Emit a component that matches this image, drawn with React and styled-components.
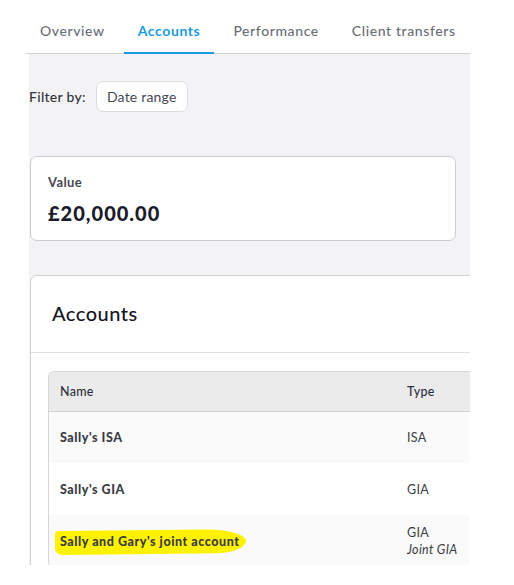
import React from "react";
import styled, { createGlobalStyle } from "styled-components";

const Global = createGlobalStyle`
  html, body { margin: 0; padding: 0; background: #ffffff; }
  body { font-family: "Lato", "Noto Sans", sans-serif; -webkit-font-smoothing: antialiased; }
  * { box-sizing: border-box; }
`;

const Page = styled.div`
  width: 441px;
  margin-left: 29px;
`;

const TabBar = styled.div`
  display: flex;
  gap: 5px;
  height: 54px;
  border-bottom: 1px solid #cfd0d4;
  margin-left: -3px;
`;

const Tab = styled.div`
  display: flex;
  align-items: center;
  padding: 9px 14px 0;
  font-size: 14px;
  letter-spacing: 0.6px;
  color: ${(p) => (p.$active ? "#1b9ce0" : "#6b6e78")};
  font-weight: ${(p) => (p.$active ? 700 : 500)};
  border-bottom: 2px solid ${(p) => (p.$active ? "#1b9ce0" : "transparent")};
  margin-bottom: -1px;
  white-space: nowrap;
`;

const Content = styled.div`
  background: #f3f3f5;
  height: 511px;
  overflow: hidden;
  padding: 27px 0 0 1px;
`;

const FilterRow = styled.div`
  display: flex;
  align-items: center;
  gap: 10px;
  margin-left: -1px;
`;

const FilterLabel = styled.span`
  font-size: 14px;
  color: #33353d;
  font-weight: 500;
  letter-spacing: 0.3px;
`;

const FilterButton = styled.div`
  height: 31px;
  padding: 0 10px;
  display: flex;
  align-items: center;
  background: #ffffff;
  border: 1px solid #dcdde1;
  border-radius: 7px;
  font-size: 14px;
  color: #454852;
  letter-spacing: 0.2px;
`;

const ValueCard = styled.div`
  margin-top: 44px;
  width: 426px;
  height: 85px;
  background: #ffffff;
  border: 1px solid #cbccd1;
  border-radius: 7px;
  padding: 17px 17px;
`;

const ValueLabel = styled.div`
  font-size: 13px;
  font-weight: 700;
  color: #464852;
  line-height: 16px;
  letter-spacing: 0.4px;
`;

const ValueAmount = styled.div`
  margin-top: 11px;
  font-size: 20px;
  font-weight: 900;
  color: #1b1b2a;
  letter-spacing: 1px;
  line-height: 24px;
`;

const AccountsCard = styled.div`
  margin-top: 34px;
  width: 500px;
  background: #ffffff;
  border: 1px solid #cfd0d4;
  border-radius: 7px;
  padding-bottom: 40px;
`;

const CardHeader = styled.div`
  height: 77px;
  display: flex;
  align-items: center;
  padding: 0 21px 3px;
  border-bottom: 1px solid #e0e0e3;
  font-size: 20px;
  font-weight: 500;
  color: #15151f;
  letter-spacing: 0.5px;
`;

const CardBody = styled.div`
  padding: 18px 0 0 17px;
`;

const Table = styled.div`
  width: 480px;
  border: 1px solid #d6d6da;
  border-right: none;
  border-radius: 6px 0 0 6px;
  overflow: hidden;
`;

const Row = styled.div`
  display: grid;
  grid-template-columns: 347px 1fr;
  align-items: center;
  height: ${(p) => p.$h || 51}px;
  background: ${(p) => p.$bg};
  border-bottom: ${(p) => (p.$head ? "1px solid #d2d2d6" : "none")};
`;

const Cell = styled.div`
  padding-left: 11px;
  font-size: 12.5px;
  color: ${(p) => (p.$head ? "#2e2f3c" : "#3a3c45")};
  font-weight: ${(p) => (p.$bold ? 900 : p.$head ? 500 : 400)};
  line-height: 17px;
  letter-spacing: ${(p) => (p.$bold ? "0.55px" : "0.3px")};
`;

const Italic = styled.div`
  font-style: italic;
`;

const Highlight = styled.span`
  position: relative;
  z-index: 0;
  &::before {
    content: "";
    position: absolute;
    z-index: -1;
    left: -5px;
    right: -7px;
    top: -4px;
    bottom: -5px;
    background: #fff200;
    border-radius: 4px 40px 30px 8px / 4px 12px 12px 6px;
    transform: rotate(-0.6deg);
  }
`;

const rows = [
  { name: "Sally's ISA", type: ["ISA"], bg: "#fafafa", h: 51 },
  { name: "Sally's GIA", type: ["GIA"], bg: "#ffffff", h: 52 },
  { name: "Sally and Gary's joint account", type: ["GIA", "Joint GIA"], bg: "#fafafa", h: 52, hl: true },
];

export default function App() {
  return (
    <>
      <Global />
      <Page>
        <TabBar>
          <Tab>Overview</Tab>
          <Tab $active>Accounts</Tab>
          <Tab>Performance</Tab>
          <Tab>Client transfers</Tab>
        </TabBar>
        <Content>
          <FilterRow>
            <FilterLabel>Filter by:</FilterLabel>
            <FilterButton>Date range</FilterButton>
          </FilterRow>
          <ValueCard>
            <ValueLabel>Value</ValueLabel>
            <ValueAmount>£20,000.00</ValueAmount>
          </ValueCard>
          <AccountsCard>
            <CardHeader>Accounts</CardHeader>
            <CardBody>
              <Table>
                <Row $head $h={40} $bg="#ebebec">
                  <Cell $head>Name</Cell>
                  <Cell $head>Type</Cell>
                </Row>
                {rows.map((r) => (
                  <Row key={r.name} $bg={r.bg} $h={r.h}>
                    <Cell $bold>{r.hl ? <Highlight>{r.name}</Highlight> : r.name}</Cell>
                    <Cell>
                      <div>{r.type[0]}</div>
                      {r.type[1] && <Italic>{r.type[1]}</Italic>}
                    </Cell>
                  </Row>
                ))}
              </Table>
            </CardBody>
          </AccountsCard>
        </Content>
      </Page>
    </>
  );
}
